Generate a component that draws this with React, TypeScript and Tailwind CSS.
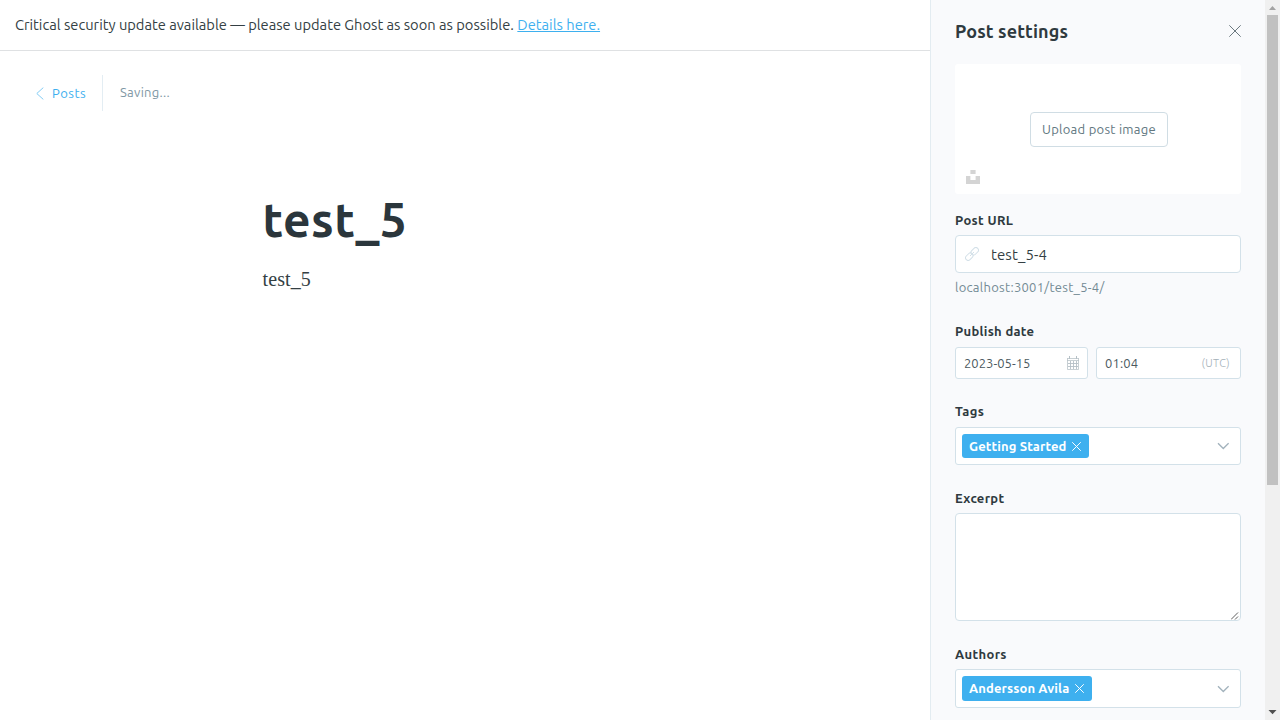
import type { ReactNode } from 'react';

function CloseIcon({ className }: { className: string }) {
  return (
    <svg viewBox="0 0 12 12" className={className} fill="none" stroke="currentColor">
      <path d="M0.3 0.3L11.7 11.7M11.7 0.3L0.3 11.7" />
    </svg>
  );
}

function ChevronDown() {
  return (
    <svg width="12" height="8" viewBox="0 0 12 8" fill="none" stroke="#a3b3bd" strokeWidth="1.4">
      <path d="M1 1.2L6.3 6.4L11.6 1.2" />
    </svg>
  );
}

function LinkIcon() {
  return (
    <svg width="14" height="14" viewBox="0 0 14 14" fill="none" stroke="#d3e0e8" strokeWidth="1">
      <rect x="-4.2" y="-2.6" width="8.4" height="5.2" rx="2.6" transform="translate(4.3 9.7) rotate(-45)" />
      <rect x="-4.2" y="-2.6" width="8.4" height="5.2" rx="2.6" transform="translate(9.7 4.3) rotate(-45)" />
      <path d="M5 9L9 5" />
    </svg>
  );
}

function CalendarIcon() {
  return (
    <svg width="12" height="14" viewBox="0 0 12 14" fill="none" stroke="#b5c0c6" strokeWidth="1">
      <path d="M0.5 2V13.5H11.5V2" strokeOpacity="0.75" />
      <path d="M0.5 2.5H11.5M0 4.5H12" strokeOpacity="0.75" />
      <path d="M2.5 0V3M9.5 0V3" />
      <path d="M3.5 5V13M6.5 5V13M9.5 5V13M1 7.5H11M1 10.5H11" strokeWidth="0.9" />
    </svg>
  );
}

function Label({ children, className }: { children: ReactNode; className: string }) {
  return <div className={`h-4 text-[13px] leading-4 font-bold whitespace-nowrap text-[#2f3a3f] ${className}`}>{children}</div>;
}

function TokenSelect({ children, className }: { children: ReactNode; className: string }) {
  return (
    <div className={`flex items-center justify-between rounded-[3px] border border-[#d3e1e9] bg-white pr-[11px] pl-[6px] ${className}`}>
      {children}
      <ChevronDown />
    </div>
  );
}

export default function App() {
  return (
    <div className="flex h-[720px] w-[1280px] overflow-hidden bg-white font-[Ubuntu,'Noto_Sans',sans-serif]">
      <main className="flex w-[930px] flex-col">
        <div className="h-[51px] border-b border-[#dfe1e3] pl-[15px] text-[14.7px] leading-[49px] whitespace-nowrap text-[#343f44]">
          <span className="tracking-[-0.01px]">Critical security update available — please update Ghost as soon as possible.</span>
          <a className="ml-[3.5px] text-[#3eb0ef] underline underline-offset-1">Details here.</a>
        </div>
        <header className="mt-6 ml-9 flex h-9 items-center text-[13px]">
          <svg width="8" height="13" viewBox="0 0 8 13" fill="none" stroke="#83ccf4">
            <path d="M7.3 0.6L0.8 6.5L7.3 12.4" />
          </svg>
          <span className="mt-[2px] ml-2 w-[50px] tracking-[0.5px] text-[#3eb0ef]">Posts</span>
          <span className="h-9 w-px bg-[#e3edf3]" />
          <span className="ml-[17px] tracking-[0.28px] text-[#7f98a5]">Saving...</span>
        </header>
        <section className="mt-[79px] ml-[262.5px] text-[#2b363c]">
          <h1 className="h-[60px] text-[48px] leading-[59px] font-bold tracking-[0.5px]">test_5</h1>
          <p className="mt-[15px] h-7 font-['Liberation_Serif',serif] text-[20px] leading-7 tracking-[0.1px] text-[#343f44]">test_5</p>
        </section>
      </main>

      <aside className="flex w-[335px] flex-col border-l border-[#e3ecf1] bg-[#f9fafc] px-[24px]">
        <div className="flex h-16 shrink-0 items-center justify-between text-[#2f3a3f]">
          <h2 className="mb-px text-[18px] font-bold tracking-[0.12px]">Post settings</h2>
          <CloseIcon className="mt-[-2px] size-3 text-[#6b787f]" />
        </div>
        <div className="relative flex h-[130px] shrink-0 items-center justify-center rounded-[3px] bg-white">
          <button className="ml-[2px] h-[35px] w-[138px] rounded-[4px] border border-[#d0dde4] pt-px text-[13px] tracking-[0.27px] whitespace-nowrap text-[#62777f]">Upload post image</button>
          <svg className="absolute bottom-[10px] left-[11px]" width="14" height="14" viewBox="0 0 14 14" fill="#d4d4d4">
            <path d="M4.4 0H9.6V4H4.4ZM0 6H4.4V10H9.6V6H14V14H0Z" />
          </svg>
        </div>
        <Label className="mt-[18px] tracking-[0.36px]">Post URL</Label>
        <div className="mt-[7px] flex h-[38px] shrink-0 items-center rounded-[4px] border border-[#d3e1e9] bg-white pl-[9px]">
          <LinkIcon />
          <span className="mt-[2px] ml-3 text-[15px] tracking-[0.1px] text-[#343f44]">test_5-4</span>
        </div>
        <div className="mt-[6px] h-4 text-[13px] leading-4 tracking-[0.28px] text-[#738a94]">localhost:3001/test_5-4/</div>
        <Label className="mt-7 tracking-[0.3px]">Publish date</Label>
        <div className="mt-2 flex h-8 shrink-0 gap-2 text-[13px] text-[#4b5960]">
          <div className="flex w-[133px] items-center justify-between rounded-[3px] border border-[#d3e1e9] bg-white pr-2 pl-2">
            <span className="mt-px tracking-[0.03px]">2023-05-15</span>
            <CalendarIcon />
          </div>
          <div className="flex flex-1 items-center justify-between rounded-[3px] border border-[#d3e1e9] bg-white pr-[10px] pl-2">
            <span className="mt-px tracking-[0.15px]">01:04</span>
            <span className="text-[11px] font-light tracking-[0.35px] text-[#a3b0b8]">(UTC)</span>
          </div>
        </div>
        <Label className="mt-6 tracking-[0.35px]">Tags</Label>
        <TokenSelect className="mt-2 h-[38px] shrink-0">
          <span className="flex h-6 w-[127px] items-center rounded-[3px] bg-[#3eb0ef] pl-[7px] text-[13px] font-semibold whitespace-nowrap text-white">
            <span className="mt-px w-[103px] tracking-[0.13px]">Getting Started</span>
            <CloseIcon className="size-[9px] stroke-[1.3]" />
          </span>
        </TokenSelect>
        <Label className="mt-[25px] tracking-[0.33px]">Excerpt</Label>
        <div className="mt-[7px] flex h-[108px] shrink-0 items-end justify-end rounded-[4px] border border-[#d3e1e9] bg-white pr-px">
          <svg width="8" height="8" viewBox="0 0 8 8" stroke="#4d4d4d" strokeWidth="0.9">
            <path d="M0 7.5L7 0.5M4 7.5L7 4.5" />
          </svg>
        </div>
        <Label className="mt-[25px] tracking-[0.37px]">Authors</Label>
        <TokenSelect className="mt-[7px] h-[39px] shrink-0">
          <span className="flex h-[25px] w-[130px] items-center rounded-[3px] bg-[#3eb0ef] pl-[7px] text-[13px] font-semibold whitespace-nowrap text-white">
            <span className="w-[106px] tracking-[0.12px]">Andersson Avila</span>
            <CloseIcon className="size-[9px] stroke-[1.3]" />
          </span>
        </TokenSelect>
      </aside>

      <div className="flex w-[15px] flex-col items-center bg-[#f0f0f0]">
        <svg width="15" height="15" viewBox="0 0 15 15" fill="#a3a3a3">
          <path d="M4 10L7.5 6L11 10Z" />
        </svg>
        <div className="ml-[-1px] h-[470px] w-[11px] bg-[#c1c1c1]" />
        <svg className="mt-auto" width="15" height="15" viewBox="0 0 15 15" fill="#505050">
          <path d="M3.5 5L7.5 9.3L11.5 5Z" />
        </svg>
      </div>
    </div>
  );
}
